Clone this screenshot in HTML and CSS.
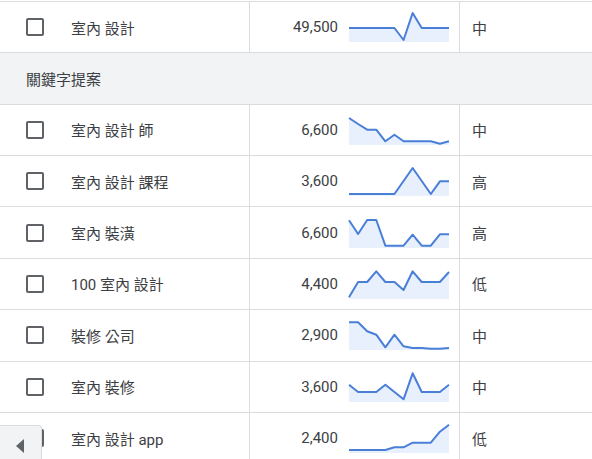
FILE: index.html
```html
<!DOCTYPE html>
<html lang="zh-Hant">
<head>
<meta charset="utf-8">
<title>關鍵字提案</title>
<link rel="stylesheet" href="styles.css">
</head>
<body>
<div class="table">
  <div class="row">
    <div class="cell kw"><span class="cb"></span><span class="label">室內 設計</span></div>
    <div class="cell vol"><span class="num">49,500</span>
      <svg class="spark" viewBox="0 0 100 30" preserveAspectRatio="none"><polygon class="area" points="0,16 9.09,16 18.18,16 27.27,16 36.36,16 45.45,16 54.55,28 63.64,1 72.73,16 81.82,16 90.91,16 100,16 100,30 0,30"/><polyline class="line" points="0,16 9.09,16 18.18,16 27.27,16 36.36,16 45.45,16 54.55,28 63.64,1 72.73,16 81.82,16 90.91,16 100,16"/></svg>
    </div>
    <div class="cell comp">中</div>
  </div>
  <div class="row section">關鍵字提案</div>
  <div class="row">
    <div class="cell kw"><span class="cb"></span><span class="label">室內 設計 師</span></div>
    <div class="cell vol"><span class="num">6,600</span>
      <svg class="spark" viewBox="0 0 100 30" preserveAspectRatio="none"><polygon class="area" points="0,3 9.09,9 18.18,14.7 27.27,14.7 36.36,26.3 45.45,19.7 54.55,26.3 63.64,26.3 72.73,26.3 81.82,26.3 90.91,28.7 100,26.3 100,30 0,30"/><polyline class="line" points="0,3 9.09,9 18.18,14.7 27.27,14.7 36.36,26.3 45.45,19.7 54.55,26.3 63.64,26.3 72.73,26.3 81.82,26.3 90.91,28.7 100,26.3"/></svg>
    </div>
    <div class="cell comp">中</div>
  </div>
  <div class="row">
    <div class="cell kw"><span class="cb"></span><span class="label">室內 設計 課程</span></div>
    <div class="cell vol"><span class="num">3,600</span>
      <svg class="spark" viewBox="0 0 100 30" preserveAspectRatio="none"><polygon class="area" points="0,28 9.09,28 18.18,28 27.27,28 36.36,28 45.45,28 54.55,15 63.64,2 72.73,15 81.82,28 90.91,15.3 100,15.3 100,30 0,30"/><polyline class="line" points="0,28 9.09,28 18.18,28 27.27,28 36.36,28 45.45,28 54.55,15 63.64,2 72.73,15 81.82,28 90.91,15.3 100,15.3"/></svg>
    </div>
    <div class="cell comp">高</div>
  </div>
  <div class="row">
    <div class="cell kw"><span class="cb"></span><span class="label">室內 裝潢</span></div>
    <div class="cell vol"><span class="num">6,600</span>
      <svg class="spark" viewBox="0 0 100 30" preserveAspectRatio="none"><polygon class="area" points="0,2.3 9.09,16 18.18,2 27.27,2 36.36,27.7 45.45,27.7 54.55,27.7 63.64,16.7 72.73,27.7 81.82,27.7 90.91,16.3 100,16.3 100,30 0,30"/><polyline class="line" points="0,2.3 9.09,16 18.18,2 27.27,2 36.36,27.7 45.45,27.7 54.55,27.7 63.64,16.7 72.73,27.7 81.82,27.7 90.91,16.3 100,16.3"/></svg>
    </div>
    <div class="cell comp">高</div>
  </div>
  <div class="row">
    <div class="cell kw"><span class="cb"></span><span class="label">100 室內 設計</span></div>
    <div class="cell vol"><span class="num">4,400</span>
      <svg class="spark" viewBox="0 0 100 30" preserveAspectRatio="none"><polygon class="area" points="0,28.3 9.09,13 18.18,13 27.27,2.3 36.36,13 45.45,13 54.55,21 63.64,2.3 72.73,13 81.82,13 90.91,13 100,3 100,30 0,30"/><polyline class="line" points="0,28.3 9.09,13 18.18,13 27.27,2.3 36.36,13 45.45,13 54.55,21 63.64,2.3 72.73,13 81.82,13 90.91,13 100,3"/></svg>
    </div>
    <div class="cell comp">低</div>
  </div>
  <div class="row">
    <div class="cell kw"><span class="cb"></span><span class="label">裝修 公司</span></div>
    <div class="cell vol"><span class="num">2,900</span>
      <svg class="spark" viewBox="0 0 100 30" preserveAspectRatio="none"><polygon class="area" points="0,2.3 9.09,2.3 18.18,11.3 27.27,14.7 36.36,27.3 45.45,14.7 54.55,26.3 63.64,28 72.73,28 81.82,28.7 90.91,28.7 100,28 100,30 0,30"/><polyline class="line" points="0,2.3 9.09,2.3 18.18,11.3 27.27,14.7 36.36,27.3 45.45,14.7 54.55,26.3 63.64,28 72.73,28 81.82,28.7 90.91,28.7 100,28"/></svg>
    </div>
    <div class="cell comp">中</div>
  </div>
  <div class="row">
    <div class="cell kw"><span class="cb"></span><span class="label">室內 裝修</span></div>
    <div class="cell vol"><span class="num">3,600</span>
      <svg class="spark" viewBox="0 0 100 30" preserveAspectRatio="none"><polygon class="area" points="0,12.7 9.09,20 18.18,20 27.27,20 36.36,12.7 45.45,20 54.55,27.3 63.64,1.3 72.73,20 81.82,20 90.91,20 100,12.7 100,30 0,30"/><polyline class="line" points="0,12.7 9.09,20 18.18,20 27.27,20 36.36,12.7 45.45,20 54.55,27.3 63.64,1.3 72.73,20 81.82,20 90.91,20 100,12.7"/></svg>
    </div>
    <div class="cell comp">中</div>
  </div>
  <div class="row">
    <div class="cell kw"><span class="cb"></span><span class="label">室內 設計 app</span></div>
    <div class="cell vol"><span class="num">2,400</span>
      <svg class="spark" viewBox="0 0 100 30" preserveAspectRatio="none"><polygon class="area" points="0,27 9.09,27 18.18,27 27.27,27 36.36,27 45.45,24.3 54.55,24.3 63.64,19.7 72.73,19.7 81.82,19.7 90.91,8.7 100,1.7 100,30 0,30"/><polyline class="line" points="0,27 9.09,27 18.18,27 27.27,27 36.36,27 45.45,24.3 54.55,24.3 63.64,19.7 72.73,19.7 81.82,19.7 90.91,8.7 100,1.7"/></svg>
    </div>
    <div class="cell comp">低</div>
  </div>
</div>
<button class="back" type="button" aria-label="返回"><svg class="tri" viewBox="0 0 8 14"><polygon points="8,0 8,14 0,7"/></svg></button>
</body>
</html>
```
FILE: styles.css
```css
html, body {
  margin: 0;
  padding: 0;
  background: #ffffff;
  overflow: hidden;
}
body {
  font-family: Roboto, "Noto Sans CJK TC", sans-serif;
  font-size: 15px;
  color: #3c4043;
  width: 592px;
  height: 459px;
  position: relative;
}
.table {
  margin-top: 1px;
  border-top: 1px solid #dadce0;
}
.row {
  display: grid;
  grid-template-columns: 250px 210px 1fr;
  height: 51.36px;
  box-sizing: border-box;
  border-bottom: 1px solid #dadce0;
}
.cell {
  display: flex;
  align-items: center;
  box-sizing: border-box;
}
.kw, .vol {
  border-right: 1px solid #dadce0;
}
.kw {
  padding-left: 26px;
  gap: 27px;
}
.cb {
  width: 18px;
  height: 18px;
  box-sizing: border-box;
  border: 2px solid #5f6368;
  border-radius: 2px;
  flex: none;
}
.vol {
  justify-content: flex-end;
  padding-right: 10px;
  gap: 11px;
}
.spark {
  width: 100px;
  height: 30px;
  overflow: visible;
  flex: none;
}
.area {
  fill: #e8f0fe;
}
.line {
  fill: none;
  stroke: #4a7fd8;
  stroke-width: 2;
  stroke-linejoin: round;
  vector-effect: non-scaling-stroke;
}
.comp {
  padding-left: 12px;
}
.section {
  display: flex;
  align-items: center;
  background: #f1f3f4;
  padding-left: 26px;
}
.back {
  position: absolute;
  left: 0;
  top: 425px;
  width: 42px;
  height: 40px;
  margin: 0;
  padding: 0;
  background: #f1f3f4;
  border: 1px solid #dadce0;
  border-left: none;
  border-radius: 0 4px 0 0;
  display: flex;
  align-items: flex-start;
  justify-content: center;
}
.tri {
  width: 8px;
  height: 14px;
  margin-top: 13px;
  margin-right: 2px;
  fill: #5f6368;
}
```
